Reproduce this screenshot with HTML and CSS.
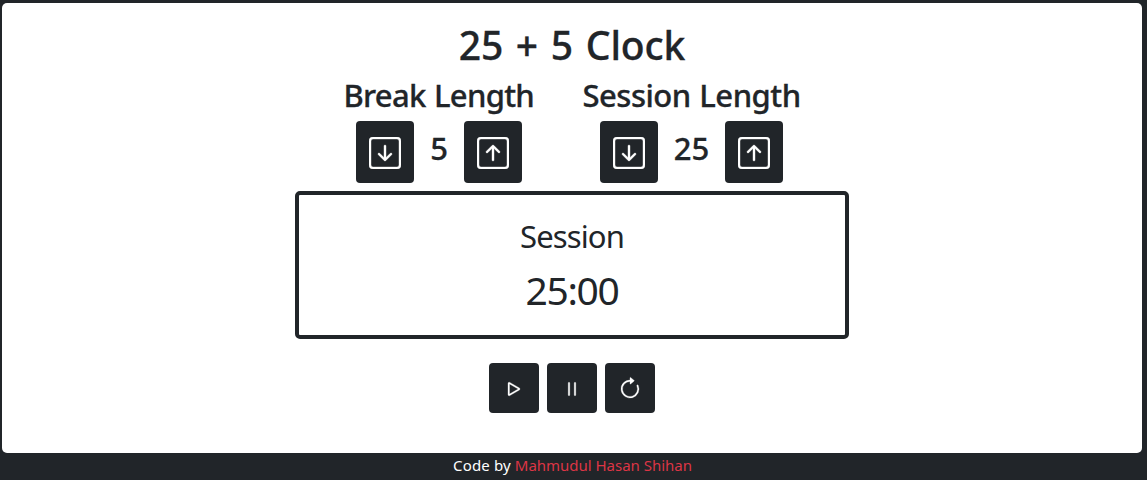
FILE: index.html
```html
<!DOCTYPE html>
<html lang="en">
<head>
<meta charset="utf-8">
<title>25 + 5 Clock</title>
<link rel="stylesheet" href="styles.css">
</head>
<body>
<svg class="symbols" width="0" height="0">
  <symbol id="down" viewBox="0 0 16 16"><path fill-rule="evenodd" d="M15 2a1 1 0 0 0-1-1H2a1 1 0 0 0-1 1v12a1 1 0 0 0 1 1h12a1 1 0 0 0 1-1V2zM0 2a2 2 0 0 1 2-2h12a2 2 0 0 1 2 2v12a2 2 0 0 1-2 2H2a2 2 0 0 1-2-2V2zm8.5 2.500a.5.5 0 0 0-1 0v5.793L5.354 8.146a.5.5 0 1 0-.708.708l3 3a.5.5 0 0 0 .708 0l3-3a.5.5 0 0 0-.708-.708L8.500 10.293V4.500z"/></symbol>
  <symbol id="up" viewBox="0 0 16 16"><path fill-rule="evenodd" d="M15 2a1 1 0 0 0-1-1H2a1 1 0 0 0-1 1v12a1 1 0 0 0 1 1h12a1 1 0 0 0 1-1V2zM0 2a2 2 0 0 1 2-2h12a2 2 0 0 1 2 2v12a2 2 0 0 1-2 2H2a2 2 0 0 1-2-2V2zm8.500 9.500a.5.5 0 0 1-1 0V5.707L5.354 7.854a.5.5 0 1 1-.708-.708l3-3a.5.5 0 0 1 .708 0l3 3a.5.5 0 0 1-.708.708L8.500 5.707V11.500z"/></symbol>
</svg>
<main class="card">
  <h1 class="title">25 + 5 Clock</h1>
  <div class="lengths">
    <section class="length">
      <h2 class="label label-break">Break Length</h2>
      <div class="stepper">
        <button class="btn step"><svg class="step-icon"><use href="#down"/></svg></button>
        <span class="value">5</span>
        <button class="btn step"><svg class="step-icon"><use href="#up"/></svg></button>
      </div>
    </section>
    <section class="length">
      <h2 class="label label-session">Session Length</h2>
      <div class="stepper">
        <button class="btn step"><svg class="step-icon"><use href="#down"/></svg></button>
        <span class="value value-wide">25</span>
        <button class="btn step"><svg class="step-icon"><use href="#up"/></svg></button>
      </div>
    </section>
  </div>
  <div class="timer">
    <div class="timer-label">Session</div>
    <div class="time">25:00</div>
  </div>
  <div class="controls">
    <button class="btn control"><svg class="control-icon" viewBox="0 0 16 16"><path d="M10.804 8 5 4.633v6.734L10.804 8zm.792-.696a.802.802 0 0 1 0 1.392l-6.363 3.692C4.713 12.690 4 12.345 4 11.692V4.308c0-.653.713-.998 1.233-.696l6.363 3.692z"/></svg></button>
    <button class="btn control"><svg class="control-icon" viewBox="0 0 16 16"><path d="M6 3.500a.5.5 0 0 1 .5.5v8a.5.5 0 0 1-1 0V4a.5.5 0 0 1 .5-.5zm4 0a.5.5 0 0 1 .5.5v8a.5.5 0 0 1-1 0V4a.5.5 0 0 1 .5-.5z"/></svg></button>
    <button class="btn control"><svg class="control-icon" viewBox="0 0 16 16"><path fill-rule="evenodd" d="M8 3a5 5 0 1 0 4.546 2.914.5.5 0 0 1 .908-.417A6 6 0 1 1 8 2v1z"/><path d="M8 4.466V.534a.25.25 0 0 1 .410-.192l2.360 1.966c.12.1.12.284 0 .384L8.410 4.658A.25.25 0 0 1 8 4.466z"/></svg></button>
  </div>
</main>
<footer class="footer"><span class="credit">Code by</span><a class="author">Mahmudul Hasan Shihan</a></footer>
</body>
</html>
```
FILE: styles.css
```css
* { box-sizing: border-box; }
body {
  margin: 0;
  height: 480px;
  padding: 3px 5px 0 2px;
  overflow: hidden;
  background: #212529;
  color: #212529;
  font-family: "Noto Sans", "Open Sans", sans-serif;
}
.symbols { position: absolute; }
.card {
  height: 450px;
  padding-top: 18px;
  background: #fff;
  border-radius: 5px;
  display: flex;
  flex-direction: column;
  align-items: center;
}
.title, .label, .value { margin: 0; font-weight: 500; white-space: nowrap; -webkit-text-stroke: 0.3px currentColor; }
.title { height: 56px; line-height: 48px; font-size: 39px; letter-spacing: -0.1px; word-spacing: 2.7px; }
.lengths { display: flex; gap: 48px; height: 114px; }
.length { display: flex; flex-direction: column; align-items: center; }
.label { height: 44px; line-height: 37px; font-size: 31px; word-spacing: 1px; }
.label-break { width: 191px; letter-spacing: -0.7px; }
.label-session { width: 218px; letter-spacing: -0.5px; }
.stepper { display: flex; }
.btn {
  padding: 0;
  border: 0;
  border-radius: 4px;
  background: #212529;
  color: #fff;
  display: flex;
  align-items: center;
  justify-content: center;
}
.btn svg { fill: currentColor; stroke: currentColor; stroke-width: 0.2; overflow: visible; }
.step { width: 58px; height: 62px; padding-top: 2px; }
.step-icon { width: 32px; height: 32px; }
.value { width: 50px; text-align: center; line-height: 54px; font-size: 31px; }
.value-wide { width: 67px; }
.timer {
  width: 554px;
  height: 148px;
  border: 4px solid #212529;
  border-radius: 5px;
  padding-top: 21px;
  text-align: center;
}
.timer-label { height: 48px; line-height: 40px; font-size: 31px; letter-spacing: -0.9px; }
.time { line-height: 52px; font-size: 39px; letter-spacing: -1.3px; }
.controls { display: flex; gap: 8px; margin-top: 24px; }
.control { width: 50px; height: 50px; padding-top: 2px; }
.control-icon { width: 24px; height: 24px; }
.footer {
  display: flex;
  justify-content: center;
  gap: 4px;
  line-height: 24px;
  font-size: 15px;
  color: #fff;
}
.credit { margin-left: 1px; letter-spacing: 0.15px; }
.author { color: #dc3545; letter-spacing: -0.02px; }
```
